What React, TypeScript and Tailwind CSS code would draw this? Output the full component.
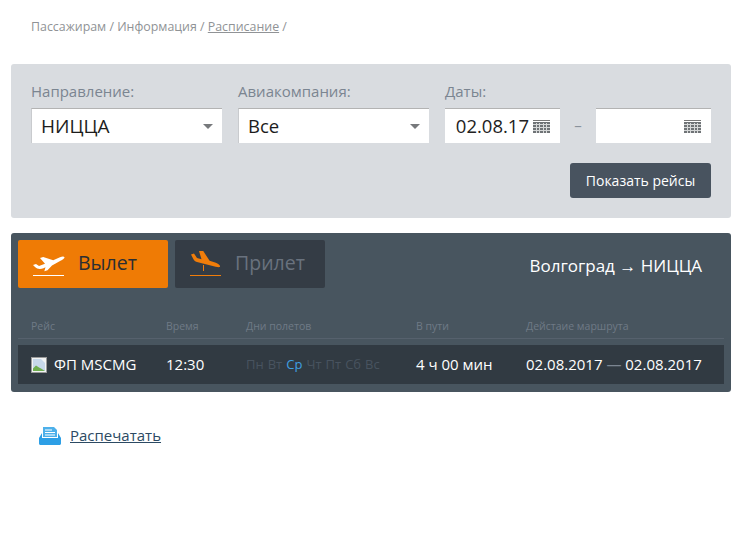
const Caret = () => (
  <span className="w-0 h-0 border-x-[5px] border-x-transparent border-t-[5px] border-t-[#77797c]" />
);

const CalendarIcon = () => (
  <svg width="17" height="13" viewBox="0 0 17 13" className="shrink-0">
    <rect x="0" y="0" width="17" height="1" fill="#777" />
    <rect x="0" y="2" width="17" height="11" fill="#6f7376" />
    {[4, 7, 10].map((y) => (
      <rect key={y} x="0" y={y} width="17" height="1" fill="#d6d8d8" />
    ))}
    {[3, 6, 10, 13].map((x) => (
      <rect key={x} x={x} y="3" width="1" height="10" fill="#d6d8d8" />
    ))}
  </svg>
);

const PlaneUp = () => (
  <svg width="32" height="26" viewBox="0 0 32 26">
    <path
      d="M0 14l3-1 3 2 6-2.200L7 7l3.200-1 10 3.200 6.800-3c2-.8 4-1 4.500 0 .4 1-2 2.500-4 3.500l-8.500 4.800-4.500 4.700-3.200 1 1.200-4-2 1c-3 1.200-6.500 1-8.500-1.200z"
      fill="#fff"
    />
    <rect x="0" y="24" width="31" height="1" fill="#fff" />
  </svg>
);

const PlaneDown = () => (
  <svg width="32" height="26" viewBox="0 0 32 26">
    <path
      d="M1 3.500L4 2.500 7 7l4.500 1.300L9 0l3.600-1 7 10.800 5.500 1.700c2.500.8 5 2.500 5 4 0 .8-2 .8-4.500.2L7 11c-2-.6-3.200-1.800-3.800-3.200z"
      fill="#f07d0a"
    />
    <rect x="13" y="14" width="1" height="6" fill="#f07d0a" />
    <rect x="0" y="24" width="31" height="1" fill="#f07d0a" />
  </svg>
);

const PrintIcon = () => (
  <svg width="22" height="18" viewBox="0 0 22 18">
    <path d="M4 0h11l3 3v7H4z" fill="#4db0ea" />
    <path d="M6 2.500h7v1H6zM6 5h10v1H6zM6 7.500h10v1H6z" fill="#fff" />
    <path d="M3 6v5h16V6l3 5v5.500c0 .8-.7 1.500-1.500 1.500h-19C.7 18 0 17.300 0 16.500V11z" fill="#2d9fe6" />
  </svg>
);

const BrokenImage = () => (
  <svg width="16" height="16" viewBox="0 0 16 16" className="shrink-0">
    <rect x="0.500" y="0.500" width="15" height="15" fill="#f2f4f4" stroke="#9a9a9a" />
    <path d="M2 2h8l4 4v8H2z" fill="#c7d8ea" />
    <path d="M2 14v-2.500l3-3 3 2 2 1 4 2.500z" fill="#6fae4f" />
  </svg>
);

const Select = ({ value, bold = false }: { value: string; bold?: boolean }) => (
  <div className="w-[191px] h-[35px] bg-white border-t border-l border-t-[#b3b3b3] border-l-[#c9cbce] flex items-center justify-between pl-[9px] pr-[9px]">
    <span className={`text-[#1c1c1c] ${bold ? "text-[19px] font-medium" : "text-[18.500px]"}`}>{value}</span>
    <Caret />
  </div>
);

const DateInput = ({ value }: { value?: string }) => (
  <div className="w-[115px] h-[35px] bg-white border-t border-t-[#b3b3b3] flex items-center justify-end pr-[10px]">
    {value && <span className="text-[18.500px] text-[#222] mr-[4px]">{value}</span>}
    <CalendarIcon />
  </div>
);

const days = ["Пн", "Вт", "Ср", "Чт", "Пт", "Сб", "Вс"];

export default function App() {
  return (
    <div className="w-[748px] h-[550px] bg-white overflow-hidden font-['Open_Sans',sans-serif]">
      <div className="pl-[31px] pt-[18px] h-[64px] text-[12.400px] leading-[17px] text-[#909396]">
        Пассажирам / Информация / <span className="underline">Расписание</span> /
      </div>

      <div className="ml-[11px] w-[720px] h-[154px] bg-[#d9dce0] rounded-[3px] px-[20px] pt-[17px]">
        <div className="flex">
          <div className="w-[207px] shrink-0">
            <div className="text-[15px] leading-[20px] text-[#7b8591] mb-[7px]">Направление:</div>
            <Select value="НИЦЦА" bold />
          </div>
          <div className="w-[207px] shrink-0">
            <div className="text-[15px] leading-[20px] text-[#7b8591] mb-[7px]">Авиакомпания:</div>
            <Select value="Все" />
          </div>
          <div className="shrink-0">
            <div className="text-[15px] leading-[20px] text-[#7b8591] mb-[7px]">Даты:</div>
            <div className="flex items-center">
              <DateInput value="02.08.17" />
              <span className="w-[36px] text-center text-[15px] text-[#8a929c]">–</span>
              <DateInput />
            </div>
          </div>
        </div>
        <div className="flex justify-end mt-[20px]">
          <button className="w-[141px] h-[35px] bg-[#48535f] rounded-[3px] text-[14px] text-white">
            Показать рейсы
          </button>
        </div>
      </div>

      <div className="ml-[11px] mt-[15px] w-[720px] h-[159px] bg-[#48555f] rounded-[3px] px-[7px] pt-[7px]">
        <div className="flex gap-[7px] items-center">
          <div className="w-[150px] h-[48px] bg-[#ef7b05] rounded-[2px] flex items-center pl-[15px] gap-[13px]">
            <PlaneUp />
            <span className="text-[19.500px] font-medium text-[#2a2e33] pb-[2px]">Вылет</span>
          </div>
          <div className="w-[150px] h-[48px] bg-[#343c45] rounded-[2px] flex items-center pl-[15px] gap-[13px]">
            <PlaneDown />
            <span className="text-[19.500px] font-medium text-[#69727e] pb-[2px]">Прилет</span>
          </div>
          <div className="flex-1 pr-[22px] pt-[3px] text-right text-[17px] text-white">Волгоград → НИЦЦА</div>
        </div>

        <div className="h-[51px] pt-[31px] border-b border-[#56616d] flex text-[10.500px] leading-[14px] text-[#6f7a86]">
          <span className="w-[148px] pl-[13px]">Рейс</span>
          <span className="w-[80px]">Время</span>
          <span className="w-[170px]">Дни полетов</span>
          <span className="w-[110px]">В пути</span>
          <span>Дейстаие маршрута</span>
        </div>

        <div className="mt-[6px] h-[39px] bg-[#313a42] flex items-center text-[15px] text-white">
          <div className="w-[148px] pl-[13px] flex items-center gap-[7px]">
            <BrokenImage />
            <span>ФП MSCMG</span>
          </div>
          <span className="w-[80px]">12:30</span>
          <div className="w-[170px] flex gap-[4px] text-[13px] text-[#48535f]">
            {days.map((d) => (
              <span key={d} className={d === "Ср" ? "text-[#3f9fe0]" : ""}>
                {d}
              </span>
            ))}
          </div>
          <span className="w-[110px]">4 ч 00 мин</span>
          <span>
            02.08.2017 <span className="text-[#7b8591]">—</span> 02.08.2017
          </span>
        </div>
      </div>

      <div className="ml-[39px] mt-[34px] flex items-center gap-[9px]">
        <PrintIcon />
        <span className="text-[15px] leading-[19px] text-[#2c4a63] underline">Распечатать</span>
      </div>
    </div>
  );
}
